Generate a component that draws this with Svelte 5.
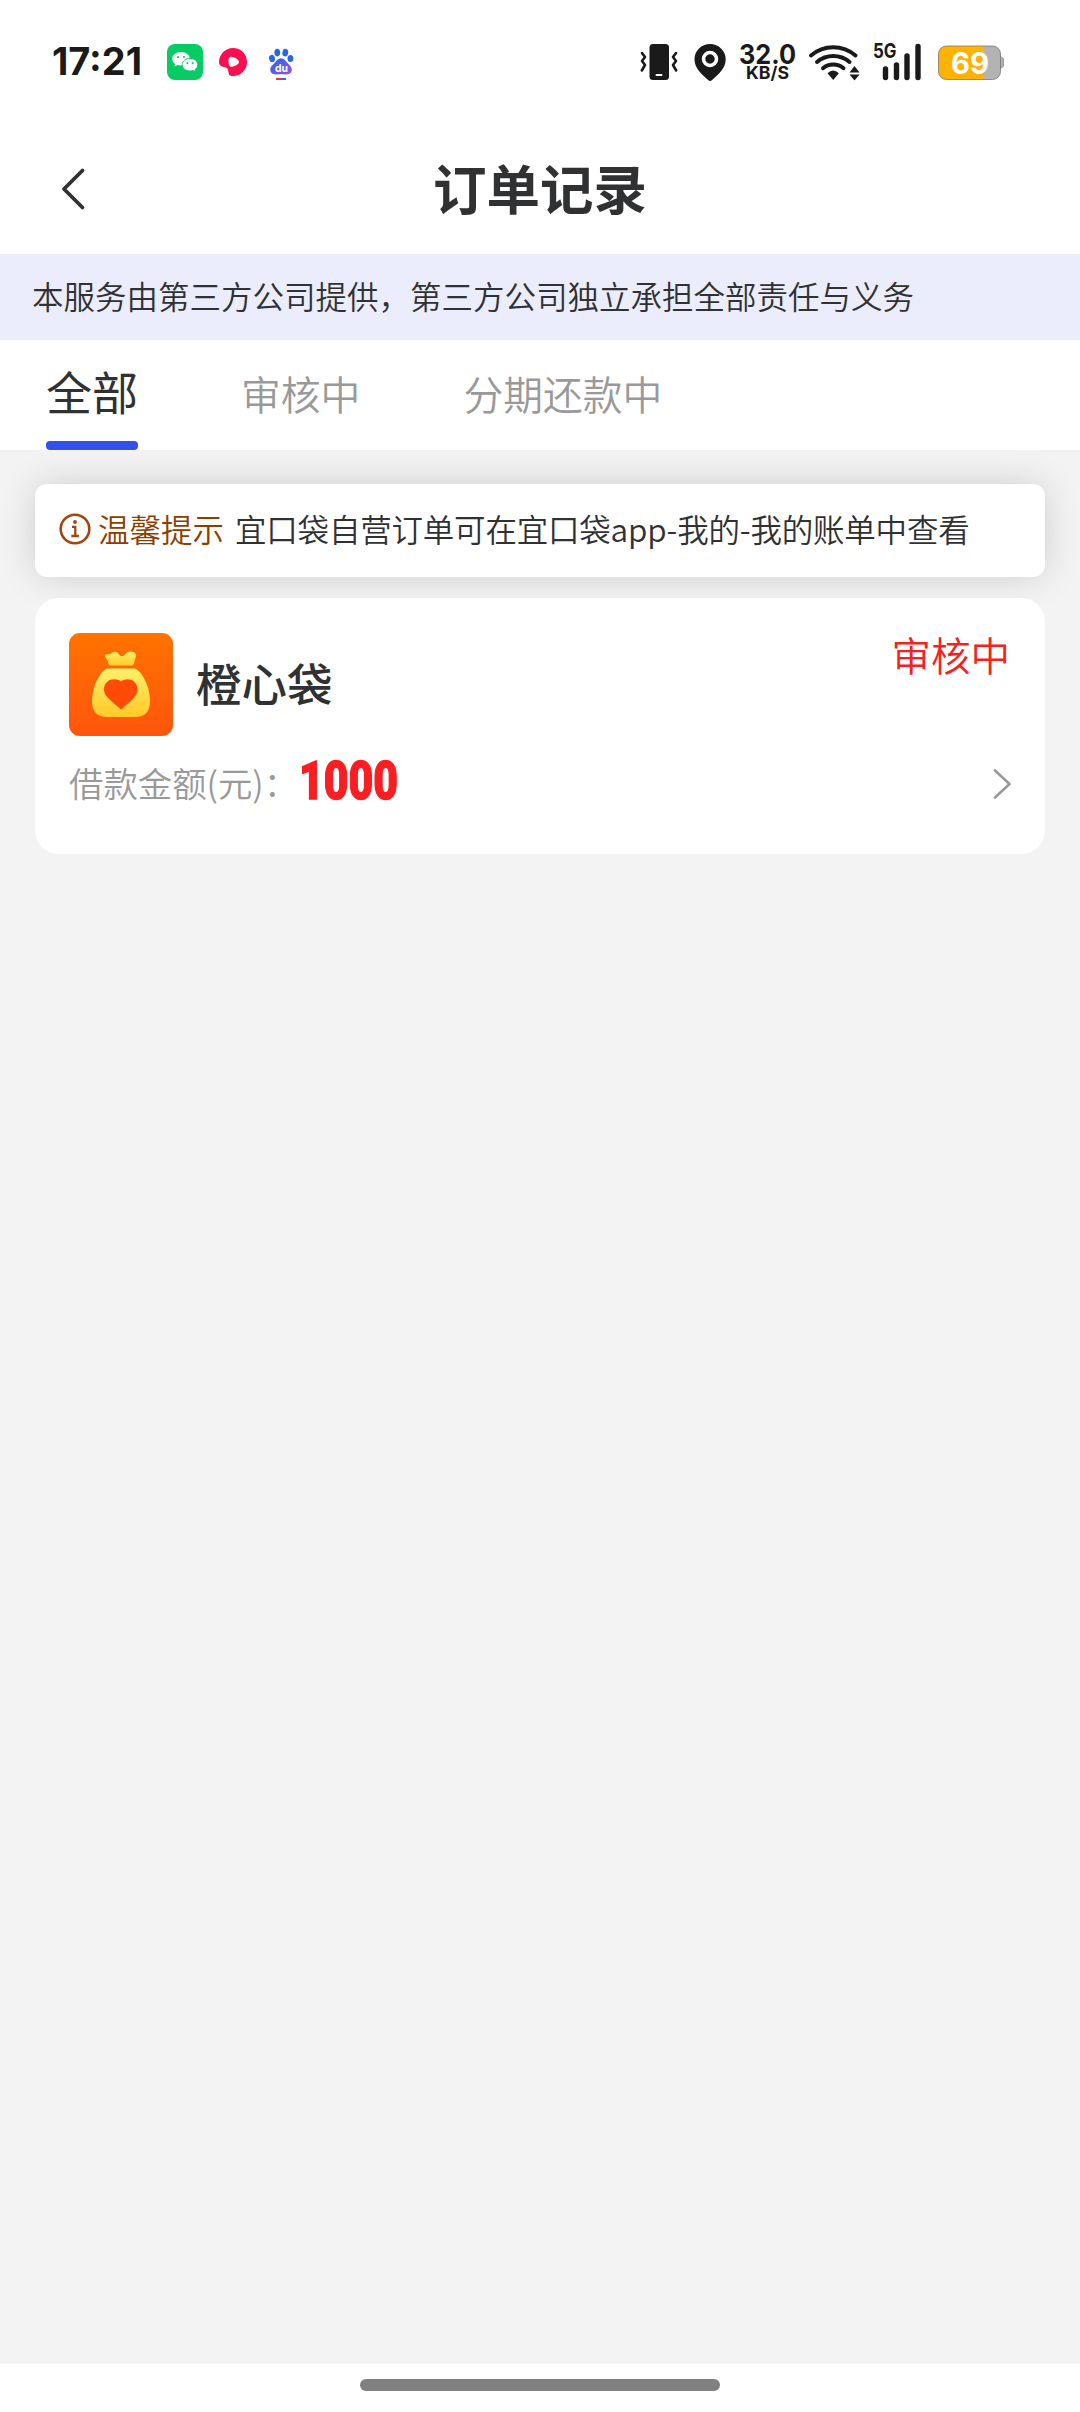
<script lang="ts">
  type Order = { id: number; name: string; status: string; amount: string };

  const tabs = ['全部', '审核中', '分期还款中'];
  let active = $state(0);

  const orders: Order[] = [{ id: 1, name: '橙心袋', status: '审核中', amount: '1000' }];
</script>

<div class="page">
  <div class="statusBar">
    <svg class="statusIcons" width="300" height="90" viewBox="0 0 300 90">
      <text class="clock" x="22" y="55" textLength="90" lengthAdjust="spacingAndGlyphs">17:21</text>

      <!-- wechat -->
      <rect x="137" y="24" width="36" height="36" rx="8" fill="#07cc66" />
      <path d="M151 32c-5 0-8.800 3-8.800 6.700 0 2.200 1.100 4 2.900 5.200l-.6 2.600 3-1.500c1.100.3 2.300.4 3.500.4 4.900 0 8.800-3 8.800-6.700s-3.900-6.700-8.800-6.700z" fill="#fff" />
      <path d="M160 38.400c-4.400 0-7.800 2.800-7.800 6.300s3.400 6.300 7.800 6.300c1 0 2-.1 2.900-.4l2.500 1.300-.5-2.200c1.800-1.200 2.900-2.900 2.900-5 0-3.500-3.400-6.300-7.800-6.300z" fill="#fff" stroke="#07cc66" stroke-width="1" />
      <g fill="#07cc66">
        <circle cx="148" cy="37" r="1.100" /><circle cx="154" cy="37" r="1.100" />
        <circle cx="157.300" cy="43" r="1" /><circle cx="162.700" cy="43" r="1" />
      </g>

      <!-- video -->
      <path d="M203 28c8 0 14 6.200 14 14s-6.200 14-14 14c-2.500 0-4-.8-4.300-2.600-.4-2.300-.6-4.400-2.400-5.600-2.600-1.300-7.300-1.200-7.300-5.300C189 34.500 195 28 203 28z" fill="#fa0f50" />
      <path d="M199.500 37.200c2.600-1.700 9.500 2 9.500 4.800s-6.600 5.500-8.800 4.600c-2-.8-2.300-8.400-.7-9.400z" fill="#fff" />

      <!-- baidu -->
      <defs>
        <linearGradient id="paw" x1="0" y1="0" x2="1" y2="1">
          <stop offset="0" stop-color="#2468e8" />
          <stop offset="1" stop-color="#9a4df0" />
        </linearGradient>
      </defs>
      <g fill="#2468e8">
        <ellipse cx="242" cy="38.500" rx="2.900" ry="3.700" transform="rotate(-12 242 38.500)" />
        <ellipse cx="247.300" cy="32.600" rx="2.900" ry="3.800" />
        <ellipse cx="255.300" cy="32.600" rx="2.900" ry="3.800" transform="rotate(12 255.300 32.600)" />
        <ellipse cx="260.400" cy="38.500" rx="2.900" ry="3.600" />
      </g>
      <path d="M251 38.200c3 0 4.700 2.300 6.300 4.600 1.700 2.200 4.500 3.600 4.500 6.800 0 4-3 5-5.800 4.800-3.400-.3-6.600-.3-10 0-3 .2-5.700-1-5.700-4.800 0-3.200 2.800-4.600 4.500-6.800 1.600-2.300 3.200-4.600 6.200-4.600z" fill="url(#paw)" />
      <text class="du" x="245" y="51.500" textLength="13" lengthAdjust="spacingAndGlyphs">du</text>
      <path d="M246 59h5" stroke="#e6324b" stroke-width="2" />
      <path d="M251 59h5" stroke="#2f6de6" stroke-width="2" />
    </svg>

    <svg class="statusIcons" width="400" height="90" viewBox="0 0 400 90">
      <!-- vibrate -->
      <rect x="29.500" y="24" width="19.500" height="36" rx="3.500" fill="#1a1a1a" />
      <rect x="35.500" y="54" width="7" height="2" rx="1" fill="#fff" />
      <path d="M22 33l3 4-3 4 3 4-3.200 5.500M56 33l-3 4 3 4-3 4 3.200 5.500" class="line thin" />
      <!-- location -->
      <path d="M90 24c-8.600 0-15.500 6.700-15.500 15.200 0 8.900 7 14.800 13.600 20.800a3 3 0 0 0 4 0c6.600-6 13.600-11.900 13.600-20.800C105.700 30.700 98.600 24 90 24z" fill="#1a1a1a" />
      <circle cx="90" cy="39" r="6.500" fill="#1a1a1a" stroke="#fff" stroke-width="3.500" />
      <!-- network speed -->
      <text class="speed" x="119" y="43.500" textLength="57" lengthAdjust="spacingAndGlyphs">32.0</text>
      <text class="unit" x="126" y="59" textLength="43" lengthAdjust="spacingAndGlyphs">KB/S</text>
      <!-- wifi -->
      <path d="M191 35.500a34 34 0 0 1 44.500 0M197 42a25 25 0 0 1 32.500 0M203 48.200a16 16 0 0 1 20.500 0" class="line wifi" />
      <path d="M207.500 53.200q5.500-5.600 11.400 0l-5.700 6.800z" fill="#1a1a1a" />
      <path d="M229.500 52.500l5-6.500 5 6.500zM229.500 54.500l5 6 5-6z" fill="#1a1a1a" />
      <!-- signal -->
      <text class="fiveG" x="253" y="38" textLength="23.500" lengthAdjust="spacingAndGlyphs">5G</text>
      <path d="M265.500 49v8.500M276.500 45v12.500M287 36v21.500M298 26.500v31" class="line bars" />
      <!-- battery -->
      <defs>
        <linearGradient id="level">
          <stop offset="0.740" stop-color="#ffb200" />
          <stop offset="0.740" stop-color="#b3b3b3" />
        </linearGradient>
      </defs>
      <path d="M380 36.500c2.500 1 3.500 1.500 3.500 3.500v5c0 2-1 2.500-3.500 3.500z" fill="#b3b3b3" stroke="#777" stroke-width="0.700" />
      <rect x="318.500" y="26" width="62" height="33.500" rx="8" fill="url(#level)" stroke="#777" stroke-width="0.800" />
      <text class="charge" x="350" y="54" textLength="38" lengthAdjust="spacingAndGlyphs">69</text>
    </svg>
  </div>

  <header class="navBar">
    <button class="back" aria-label="返回">
      <svg width="28" height="46" viewBox="0 0 28 46">
        <path d="M23.500 3.500L5 22l18.500 18.500" fill="none" stroke="#303133" stroke-width="3.800" stroke-linecap="round" stroke-linejoin="round" />
      </svg>
    </button>
    <h1>订单记录</h1>
  </header>

  <p class="notice">本服务由第三方公司提供，第三方公司独立承担全部责任与义务</p>

  <nav class="tabs">
    {#each tabs as tab, i}
      <button class="tab" class:active={active === i} onclick={() => (active = i)}>{tab}</button>
    {/each}
  </nav>

  <main>
    <section class="tip">
      <svg class="info" width="34" height="34" viewBox="0 0 34 34">
        <circle cx="17" cy="17" r="14.300" fill="none" stroke="#a0460f" stroke-width="2.600" />
        <circle cx="17" cy="10" r="1.900" fill="#a0460f" />
        <path d="M14 14.800h3.300v9M13.300 24h7.600" fill="none" stroke="#a0460f" stroke-width="2.300" />
      </svg>
      <span class="tipTitle">温馨提示</span>
      <span class="tipText">宜口袋自营订单可在宜口袋app-我的-我的账单中查看</span>
    </section>

    {#each orders as order (order.id)}
      <article class="order">
        <div class="orderTop">
          <svg class="logo" width="104" height="103" viewBox="0 0 104 103">
            <defs>
              <linearGradient id="orange" x1="0" y1="0" x2="0" y2="1">
                <stop offset="0" stop-color="#ff7300" />
                <stop offset="1" stop-color="#ff550d" />
              </linearGradient>
              <linearGradient id="gold" x1="0" y1="0" x2="0" y2="1">
                <stop offset="0" stop-color="#fff06a" />
                <stop offset="1" stop-color="#ffc928" />
              </linearGradient>
            </defs>
            <rect width="104" height="103" rx="11" fill="url(#orange)" />
            <path d="M36 23.500c-.5-1.500 1-2.500 3-2 2.500.3 4-2.800 7-2.800 3.300 0 4 4.500 7 4.500s4-4.700 8.500-4.700c4.500 0 6.500 2.800 5 6.300L64.800 31q-.8 1.500-2.300 1.500H41.500q-1.600 0-2-1.800-.8-4.200-3.500-7.200z" fill="url(#gold)" />
            <path d="M39 35.500H65c5.500 0 16 15.500 16 32.500 0 10.500-5 16-14.500 16H38c-10 0-15-5.500-15-16 0-17 10.500-32.500 16-32.500z" fill="url(#gold)" />
            <path d="M52 48.500c4.500-4.500 16.500-3 16.500 8 0 5-3.500 8-6.500 11.300L52 76.500 42 67.800c-3.500-3.300-7-6.300-7-11.300 0-11 12.500-12.500 17-8z" fill="#ff4a08" />
          </svg>
          <h2>{order.name}</h2>
          <span class="state">{order.status}</span>
        </div>
        <div class="orderBottom">
          <span class="label">借款金额(元)：</span>
          <svg class="amountBox" width="106" height="80" viewBox="0 0 106 80">
            <text class="amount" x="1" y="60" textLength="99" lengthAdjust="spacingAndGlyphs">{order.amount}</text>
          </svg>
          <svg class="arrow" width="22" height="34" viewBox="0 0 22 34">
            <path d="M4 3.500L18.500 17 4 30.500" fill="none" stroke="#999" stroke-width="2.600" stroke-linecap="round" stroke-linejoin="round" />
          </svg>
        </div>
      </article>
    {/each}
  </main>

  <footer class="homeBar"><span></span></footer>
</div>

<style>
  :global(body) {
    background: #fff;
  }

  .page {
    display: flex;
    flex-direction: column;
    width: 1080px;
    height: 2412px;
    overflow: hidden;
    background: #fff;
    color: #303133;
    font-family: 'Noto Sans CJK SC', sans-serif;
  }

  .statusBar {
    flex: none;
    display: flex;
    justify-content: space-between;
    box-sizing: border-box;
    height: 126px;
    padding: 20px 60px 0 30px;
  }

  .statusIcons text {
    font-family: Inter, sans-serif;
    font-weight: 700;
    fill: #1a1a1a;
  }

  .statusIcons .clock {
    font-size: 38.5px;
  }

  .statusIcons .du {
    font-size: 11px;
    fill: #fff;
  }

  .statusIcons .speed {
    font-size: 27px;
    font-weight: 650;
  }

  .statusIcons .unit {
    font-size: 17.5px;
    font-weight: 650;
  }

  .statusIcons .fiveG {
    font-size: 20px;
  }

  .statusIcons .charge {
    font-size: 30px;
    fill: #fff;
    text-anchor: middle;
  }

  .line {
    fill: none;
    stroke: #1a1a1a;
    stroke-linecap: round;
    stroke-linejoin: round;
  }

  .thin {
    stroke-width: 2.6;
  }

  .wifi {
    stroke-width: 4;
  }

  .bars {
    stroke-width: 5.4;
  }

  .navBar {
    flex: none;
    display: grid;
    grid-template-columns: 100px 1fr 100px;
    align-items: center;
    height: 128px;
  }

  button {
    padding: 0;
    border: 0;
    background: none;
    font-family: inherit;
  }

  .back {
    display: flex;
    padding-left: 59px;
  }

  h1 {
    margin: 0;
    font-size: 53.5px;
    font-weight: 700;
    line-height: 122px;
    height: 128px;
    text-align: center;
  }

  .notice {
    flex: none;
    height: 86px;
    margin: 0;
    padding-left: 32px;
    background: #ebedfc;
    font-size: 31.5px;
    font-weight: 350;
    line-height: 83px;
    white-space: nowrap;
  }

  .tabs {
    flex: none;
    display: flex;
    gap: 103px;
    height: 110px;
    padding-left: 46px;
  }

  .tab {
    display: flex;
    flex-direction: column;
    color: #999;
    font-size: 39.8px;
    font-weight: 350;
    line-height: 106px;
    white-space: nowrap;
  }

  .active {
    color: #303133;
    font-size: 46px;
    font-weight: 400;
    line-height: 101px;
  }

  .active::after {
    content: '';
    width: 100%;
    height: 9px;
    border-radius: 4px;
    background: #3350e8;
  }

  main {
    flex: 1;
    display: flex;
    flex-direction: column;
    gap: 21px;
    padding: 34px 35px 0;
    overflow: hidden;
    background: #f3f3f3;
  }

  .tip {
    display: flex;
    box-sizing: border-box;
    height: 93px;
    padding-left: 23px;
    border-radius: 12px;
    background: #fff;
    box-shadow: 0 0 36px rgba(0, 0, 0, 0.15);
    font-size: 31.5px;
    font-weight: 350;
    line-height: 88px;
    white-space: nowrap;
  }

  .info {
    margin-top: 28px;
  }

  .tipTitle {
    margin: 0 11px 0 6px;
    color: #8c4000;
  }

  .tipText {
    letter-spacing: -0.2px;
  }

  .order {
    box-sizing: border-box;
    height: 256px;
    padding: 35px 32px 0 34px;
    border-radius: 24px;
    background: #fff;
  }

  .orderTop {
    display: flex;
    height: 103px;
  }

  h2 {
    margin: 0 0 0 23px;
    font-size: 45.5px;
    font-weight: 500;
    line-height: 98px;
  }

  .state {
    margin: 0 3px 0 auto;
    color: #f52222;
    font-size: 39.5px;
    font-weight: 350;
    line-height: 42px;
  }

  .orderBottom {
    display: flex;
    align-items: center;
    height: 96px;
  }

  .label {
    width: 229px;
    margin-bottom: 4px;
    color: #999;
    font-size: 34.4px;
    font-weight: 350;
    white-space: nowrap;
  }

  .amount {
    fill: #fa1e23;
    stroke: #fa1e23;
    stroke-width: 1.4px;
    font-family: Roboto, sans-serif;
    font-size: 54px;
    font-weight: 900;
  }

  .amountBox {
    margin-bottom: 10px;
    overflow: visible;
  }

  .arrow {
    margin-left: auto;
  }

  .homeBar {
    flex: none;
    display: flex;
    justify-content: center;
    height: 48px;
    background: #fff;
  }

  .homeBar span {
    width: 360px;
    height: 12px;
    margin-top: 15px;
    border-radius: 6px;
    background: #808080;
  }
</style>
